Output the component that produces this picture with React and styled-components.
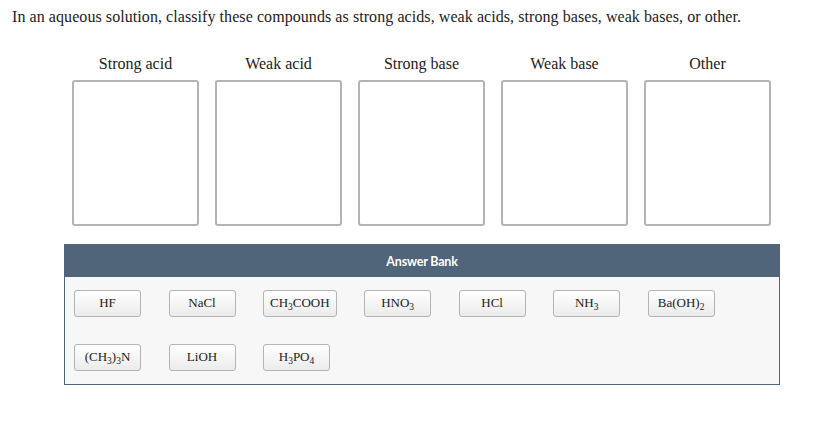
import React from "react";
import styled, { createGlobalStyle } from "styled-components";

const GlobalStyle = createGlobalStyle`
    html, body {
        margin: 0;
        padding: 0;
        background: #ffffff;
    }
    body {
        font-family: "Liberation Serif", "Times New Roman", serif;
        color: #222222;
    }
`;

const Page = styled.div`
    width: 830px;
    height: 432px;
    padding: 7px 0 0 12px;
    box-sizing: border-box;
`;

const Prompt = styled.p`
    margin: 0;
    font-size: 16px;
    line-height: 20px;
    letter-spacing: 0.07px;
    color: #222222;
`;

const Bins = styled.div`
    display: flex;
    gap: 16px;
    margin: 27px 0 0 60px;
`;

const BinColumn = styled.div`
    display: flex;
    flex-direction: column;
    align-items: center;
    width: 127px;
`;

const BinLabel = styled.div`
    font-size: 16px;
    line-height: 20px;
    height: 20px;
    margin-bottom: 6px;
    white-space: nowrap;
    color: #222222;
`;

const Bin = styled.div`
    width: 127px;
    height: 146px;
    box-sizing: border-box;
    border: 2px solid #b4b4b4;
    border-radius: 3px;
    background: #ffffff;
`;

const Bank = styled.div`
    width: 716px;
    margin: 18px 0 0 52px;
    box-sizing: border-box;
    border: 1px solid #50647a;
    background: #f7f7f7;
`;

const BankHeader = styled.div`
    height: 32px;
    background: #50647a;
    color: #ffffff;
    display: flex;
    align-items: center;
    justify-content: center;
    font-family: Lato, "Liberation Sans", sans-serif;
    font-size: 12.5px;
    letter-spacing: -0.2px;
    font-weight: 700;
`;

const Tiles = styled.div`
    display: flex;
    flex-wrap: wrap;
    column-gap: 27.5px;
    row-gap: 27px;
    padding: 13px 9px 13px 9px;
`;

const Tile = styled.div`
    min-width: 67px;
    height: 27px;
    padding: 0 6px 2px;
    box-sizing: border-box;
    display: flex;
    align-items: center;
    justify-content: center;
    border: 1px solid #b3b3b3;
    border-radius: 3px;
    background: linear-gradient(#ffffff, #ebebeb);
    font-size: 13px;
    color: #222222;
    white-space: nowrap;
`;

const Formula = styled.span`
    line-height: 15px;
`;

const Sub = styled.sub`
    font-size: 9.5px;
    vertical-align: -2.5px;
    line-height: 0;
`;

const bins = ["Strong acid", "Weak acid", "Strong base", "Weak base", "Other"];

const tiles = [
    <>HF</>,
    <>NaCl</>,
    <>CH<Sub>3</Sub>COOH</>,
    <>HNO<Sub>3</Sub></>,
    <>HCl</>,
    <>NH<Sub>3</Sub></>,
    <>Ba(OH)<Sub>2</Sub></>,
    <>(CH<Sub>3</Sub>)<Sub>3</Sub>N</>,
    <>LiOH</>,
    <>H<Sub>3</Sub>PO<Sub>4</Sub></>,
];

export default function App() {
    return (
        <Page>
            <GlobalStyle />
            <Prompt>
                In an aqueous solution, classify these compounds as strong acids, weak acids, strong
                bases, weak bases, or other.
            </Prompt>
            <Bins>
                {bins.map((name) => (
                    <BinColumn key={name}>
                        <BinLabel>{name}</BinLabel>
                        <Bin />
                    </BinColumn>
                ))}
            </Bins>
            <Bank>
                <BankHeader>Answer Bank</BankHeader>
                <Tiles>
                    {tiles.map((t, i) => (
                        <Tile key={i}>
                            <Formula>{t}</Formula>
                        </Tile>
                    ))}
                </Tiles>
            </Bank>
        </Page>
    );
}
